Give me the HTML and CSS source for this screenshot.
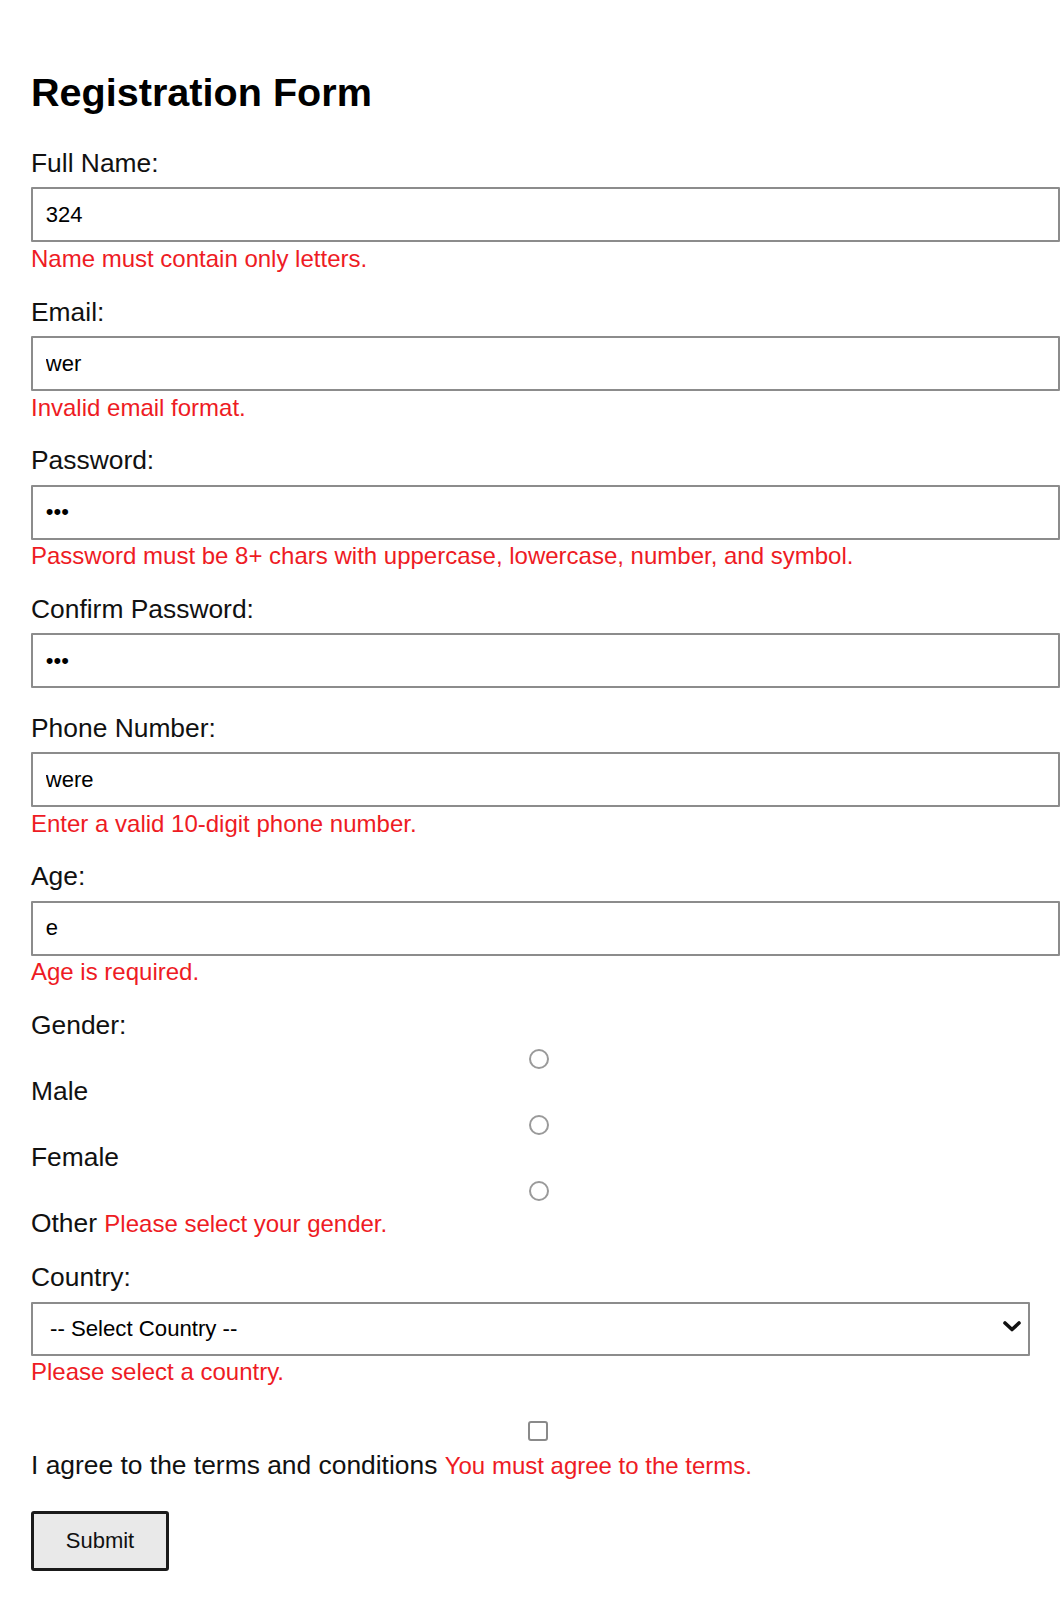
FILE: index.html
```html
<!DOCTYPE html>
<html lang="en">
<head>
<meta charset="utf-8">
<title>Registration Form</title>
<link rel="stylesheet" href="styles.css">
</head>
<body>
<div class="page">
  <h1 class="title">Registration Form</h1>
  <form class="form" novalidate>
    <div class="field">
      <label class="label" for="name">Full Name:</label>
      <input class="input" id="name" type="text" value="324">
      <span class="error">Name must contain only letters.</span>
    </div>
    <div class="field">
      <label class="label" for="email">Email:</label>
      <input class="input" id="email" type="text" value="wer">
      <span class="error">Invalid email format.</span>
    </div>
    <div class="field">
      <label class="label" for="password">Password:</label>
      <input class="input" id="password" type="password" value="abc">
      <span class="error">Password must be 8+ chars with uppercase, lowercase, number, and symbol.</span>
    </div>
    <div class="field">
      <label class="label" for="confirm">Confirm Password:</label>
      <input class="input" id="confirm" type="password" value="abc">
    </div>
    <div class="field">
      <label class="label" for="phone">Phone Number:</label>
      <input class="input" id="phone" type="text" value="were">
      <span class="error">Enter a valid 10-digit phone number.</span>
    </div>
    <div class="field">
      <label class="label" for="age">Age:</label>
      <input class="input" id="age" type="text" value="e">
      <span class="error">Age is required.</span>
    </div>
    <div class="field">
      <span class="group-label">Gender:</span>
      <div class="choice"><input class="radio" type="radio" name="gender" id="male"></div>
      <label class="option" for="male">Male</label>
      <div class="choice"><input class="radio" type="radio" name="gender" id="female"></div>
      <label class="option" for="female">Female</label>
      <div class="choice"><input class="radio" type="radio" name="gender" id="other"></div>
      <div class="line"><label for="other">Other</label> <span class="error-inline">Please select your gender.</span></div>
    </div>
    <div class="field">
      <label class="label" for="country">Country:</label>
      <div class="select-wrap">
        <select class="select" id="country">
          <option>-- Select Country --</option>
        </select>
        <svg class="chevron" width="18" height="11" viewBox="0 0 18 11" aria-hidden="true"><polyline points="2,2 9,8.5 16,2" fill="none" stroke="#111" stroke-width="3.6" stroke-linecap="round" stroke-linejoin="round"/></svg>
      </div>
      <span class="error">Please select a country.</span>
    </div>
    <div class="field terms">
      <div class="check-row"><input class="checkbox" type="checkbox" id="terms"></div>
      <div class="line"><label for="terms">I agree to the terms and conditions</label> <span class="error-inline">You must agree to the terms.</span></div>
    </div>
    <button class="submit" type="button">Submit</button>
  </form>
</div>
</body>
</html>
```

FILE: styles.css
```css
html, body {
  margin: 0;
  padding: 0;
  background: #ffffff;
}

body {
  font-family: "Liberation Sans", Arial, sans-serif;
  color: #111111;
}

.page {
  padding: 70px 30px 0 31px;
}

.title {
  margin: 0 0 35px 0;
  font-size: 39.6px;
  line-height: 44px;
  font-weight: bold;
  color: #000000;
}

.form {
  margin: 0;
}

.field {
  margin-bottom: 25.2px;
}

.label,
.group-label,
.option {
  display: block;
  font-size: 26.4px;
  line-height: 29.4px;
  color: #111111;
}

.label {
  margin-bottom: 9px;
}

.input {
  display: block;
  box-sizing: content-box;
  width: 100%;
  height: 51px;
  margin: 0;
  padding: 0 12.8px;
  border: 2px solid #8c8c8c;
  border-radius: 1px;
  font-family: "Liberation Sans", Arial, sans-serif;
  font-size: 22px;
  color: #000000;
  background: #ffffff;
  outline: none;
}

.error {
  display: block;
  margin-top: 2.5px;
  font-size: 24px;
  line-height: 27.6px;
  color: #ee1b24;
}

.error-inline {
  font-size: 24px;
  color: #ee1b24;
}

.line {
  font-size: 26.4px;
  line-height: 29.4px;
  color: #111111;
}

.choice {
  display: flex;
  align-items: center;
  justify-content: center;
  height: 36.5px;
  padding-left: 17.6px;
}

.radio {
  appearance: none;
  -webkit-appearance: none;
  width: 20px;
  height: 20px;
  margin: 0;
  border: 2px solid #9a9a9a;
  border-radius: 50%;
  background: #ffffff;
}

.select-wrap {
  position: relative;
}

.select {
  display: block;
  box-sizing: border-box;
  width: 100%;
  height: 54px;
  margin: 0;
  padding: 0 40px 0 17px;
  border: 2px solid #8c8c8c;
  border-radius: 1px;
  appearance: none;
  -webkit-appearance: none;
  background: #ffffff;
  font-family: "Liberation Sans", Arial, sans-serif;
  font-size: 22.2px;
  color: #000000;
}

.chevron {
  position: absolute;
  right: 9px;
  top: 19.5px;
}

.check-row {
  display: flex;
  align-items: center;
  justify-content: center;
  height: 40px;
  padding-left: 14.4px;
}

.checkbox {
  appearance: none;
  -webkit-appearance: none;
  width: 20px;
  height: 20px;
  margin: 0;
  border: 2px solid #8a8a8a;
  border-radius: 3px;
  background: #ffffff;
}

.terms {
  margin-bottom: 30.4px;
}

.submit {
  display: block;
  box-sizing: border-box;
  width: 138px;
  height: 60px;
  margin: 0;
  padding: 0;
  border: 3px solid #1a1a1a;
  border-radius: 3px;
  background: #e9e9e9;
  font-family: "Liberation Sans", Arial, sans-serif;
  font-size: 22px;
  color: #111111;
}
```
